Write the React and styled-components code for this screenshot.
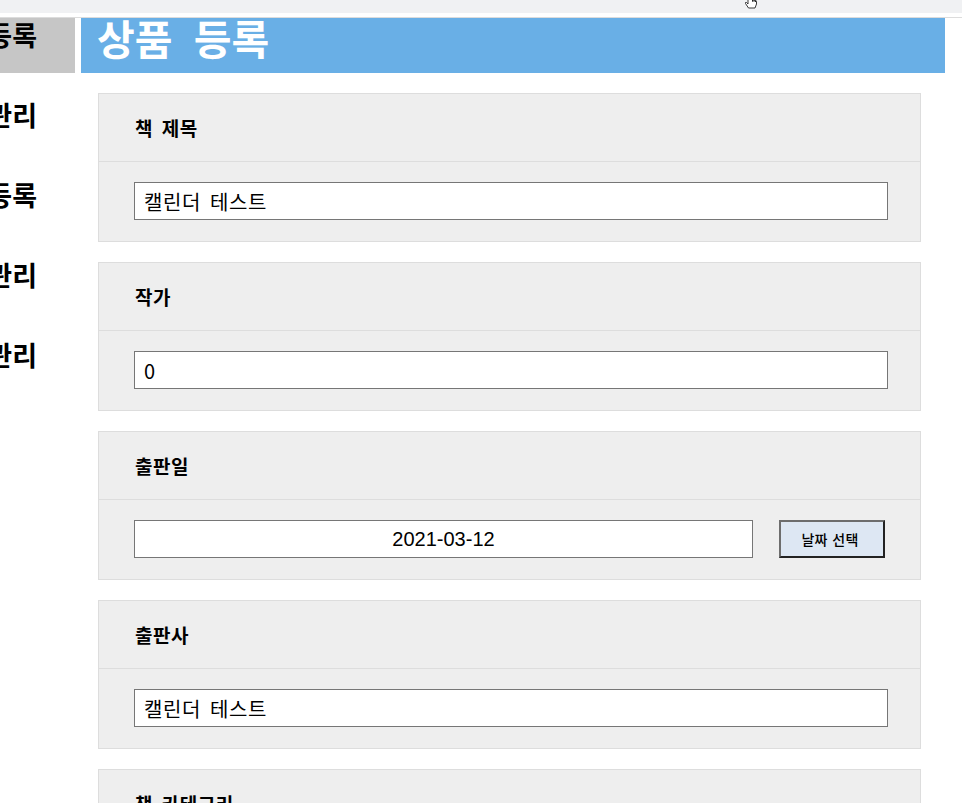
import React from "react";
import styled, { createGlobalStyle } from "styled-components";

const Global = createGlobalStyle`
  html, body { margin: 0; padding: 0; background: #fff; overflow: hidden; }
  body { font-family: "Noto Sans CJK KR", "Noto Sans", sans-serif; color: #000; }
  * { box-sizing: border-box; }
`;

const Page = styled.div`
  display: flex;
  align-items: flex-start;
  gap: 6px;
  width: 962px;
`;

const Sidebar = styled.nav`
  width: 75px;
  flex: none;
  display: flex;
  flex-direction: column;
  gap: 7px;
  overflow: hidden;
`;

const NavItem = styled.div`
  height: 73px;
  display: flex;
  align-items: center;
  justify-content: flex-end;
  padding: 0 38px 4px 0;
  white-space: nowrap;
  font-size: 27px;
  font-weight: 700;
  word-spacing: 6px;
  background: ${(p) => (p.$active ? "#c6c6c6" : "transparent")};
`;

const Main = styled.main`
  width: 864px;
  flex: none;
  display: flex;
  flex-direction: column;
`;

const Header = styled.header`
  height: 73px;
  background: #69afe6;
  display: flex;
  align-items: center;
  padding-left: 16px;
  color: #fff;
  font-size: 41px;
  font-weight: 700;
  word-spacing: 12px;
`;

const Cards = styled.div`
  display: flex;
  flex-direction: column;
  gap: 20px;
  padding: 20px 0 0 17px;
`;

const Card = styled.section`
  width: 823px;
  background: #eeeeee;
  border: 1px solid #dddddd;
`;

const CardHead = styled.div`
  height: 68px;
  border-bottom: 1px solid #dddddd;
  display: flex;
  align-items: center;
  padding-left: 36px;
  font-size: 19px;
  font-weight: 700;
  letter-spacing: 0.5px;
  word-spacing: 4px;
`;

const CardBody = styled.div`
  display: flex;
  align-items: center;
  gap: 26px;
  padding: 20px 32px 21px 35px;
`;

const Input = styled.input`
  height: 38px;
  flex: ${(p) => (p.$narrow ? "none" : "1")};
  width: ${(p) => (p.$narrow ? "619px" : "auto")};
  border: 1px solid #767676;
  background: #fff;
  padding: 0 9px;
  font-family: "Noto Sans CJK KR", "Liberation Sans", sans-serif;
  font-size: 20px;
  letter-spacing: 0.6px;
  word-spacing: 4px;
  color: #000;
  text-align: ${(p) => (p.$center ? "center" : "left")};
  outline: none;
`;

const DateText = styled(Input)`
  font-family: "Liberation Sans", Arial, sans-serif;
  letter-spacing: 0;
  word-spacing: 0;
`;

const Button = styled.button`
  width: 106px;
  height: 38px;
  flex: none;
  background: #dde7f3;
  border: 2px solid;
  border-color: #6d6d6d #222 #222 #6d6d6d;
  font-family: "Noto Sans CJK KR", sans-serif;
  font-size: 14px;
  font-weight: 500;
  letter-spacing: 0.3px;
  word-spacing: 1px;
  color: #000;
  padding: 0 4px 0 0;
`;

const Strip = styled.div`
  position: fixed;
  top: 0;
  left: 0;
  right: 0;
  height: 18px;
  background: #fff;
  border-bottom: 1px solid #dcdcdc;
`;

const TabBar = styled.div`
  height: 13px;
  background: #f0f1f3;
`;

const Cursor = styled.svg`
  position: fixed;
  left: 744px;
  top: -6px;
  width: 14px;
  height: 16px;
`;

const fields = [
  { label: "책 제목", value: "캘린더 테스트" },
  { label: "작가", value: "0" },
  { label: "출판일", value: "2021-03-12", date: true },
  { label: "출판사", value: "캘린더 테스트" },
  { label: "책 카테고리", value: "" },
];

export default function App() {
  return (
    <>
      <Global />
      <Page>
        <Sidebar>
          <NavItem $active>상품 등록</NavItem>
          <NavItem>상품 관리</NavItem>
          <NavItem>회원 등록</NavItem>
          <NavItem>회원 관리</NavItem>
          <NavItem>주문 관리</NavItem>
        </Sidebar>
        <Main>
          <Header>상품 등록</Header>
          <Cards>
            {fields.map((f) => (
              <Card key={f.label}>
                <CardHead>{f.label}</CardHead>
                <CardBody>
                  {f.date ? (
                    <>
                      <DateText $narrow $center readOnly value={f.value} />
                      <Button>날짜 선택</Button>
                    </>
                  ) : (
                    <Input readOnly value={f.value} />
                  )}
                </CardBody>
              </Card>
            ))}
          </Cards>
        </Main>
      </Page>
      <Strip>
        <TabBar />
      </Strip>
      <Cursor viewBox="0 0 14 16">
        <path
          d="M4 1 V10 L2.5 8.5 Q1 8 1.5 9.5 L4.5 14 H11 L12.5 10 V7.5 Q12.5 6.5 11.5 6.8 V8 V6.5 Q11 5.8 10 6.2 V7.5 V6 Q9.5 5.3 8.5 5.7 V7.5 V1 Q8 0 7 0 H5 Q4 0 4 1 Z"
          fill="#fff"
          stroke="#222"
          strokeWidth="0.9"
        />
      </Cursor>
    </>
  );
}
